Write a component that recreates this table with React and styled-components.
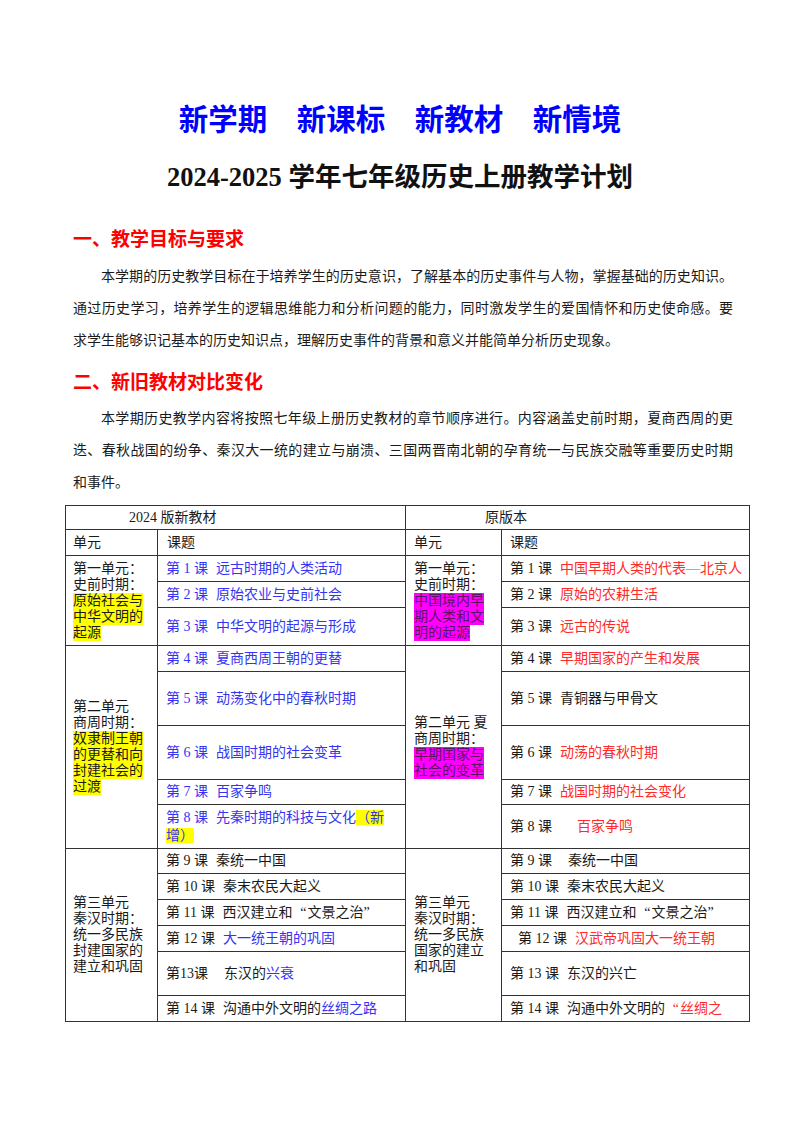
import React from 'react'
import styled, { createGlobalStyle } from 'styled-components'

const GlobalStyle = createGlobalStyle`
  html, body {
    margin: 0;
    padding: 0;
    background: #fff;
  }
  body {
    font-family: "Liberation Serif", "Noto Sans CJK SC", serif;
    color: #1a1a1a;
  }
`

const BLUE = '#3434f2'
const RED = '#ff2a2a'

const Page = styled.div`
  width: 800px;
  min-height: 1132px;
  box-sizing: border-box;
  padding-top: 99px;
`

const Slogan = styled.h1`
  margin: 0;
  text-align: center;
  font: 700 29.5px/36px "Noto Sans CJK SC", sans-serif;
  color: #0000ff;
  white-space: pre;
`

const PlanTitle = styled.h2`
  margin: 25px 0 0;
  text-align: center;
  font: 700 26.5px/34px "Liberation Serif", "Noto Sans CJK SC", serif;
  color: #111;
`

const Section = styled.section`
  padding: 0 67px 0 73px;
`

const Heading = styled.h3`
  margin: ${p => p.$top}px 0 0;
  font: 700 19px/28px "Noto Sans CJK SC", sans-serif;
  color: #ff0000;
`

const Para = styled.p`
  margin: ${p => p.$top}px 0 0;
  width: 660px;
  font: 14px/32px "Liberation Serif", "Noto Sans CJK SC", serif;
  color: #1a1a1a;
`

const Line = styled.span`
  display: block;
  text-indent: ${p => (p.$indent ? '2em' : '0')};
  text-align: ${p => (p.$justify ? 'justify' : 'left')};
  text-align-last: ${p => (p.$justify ? 'justify' : 'auto')};
`

const Sheet = styled.table`
  width: 684px;
  margin: 6px 0 0 65px;
  border-collapse: collapse;
  table-layout: fixed;
  font: 14px/18px "Liberation Serif", "Noto Sans CJK SC", serif;
  color: #1a1a1a;
`

const Col = styled.col`
  width: ${p => p.$w}px;
`

const Row = styled.tr`
  height: ${p => p.$h}px;
`

const Cell = styled.td`
  border: 1px solid #333;
  padding: 0 4px 0 ${p => p.$pad ?? 8}px;
  vertical-align: middle;
  text-align: left;
  line-height: ${p => p.$lh ?? 18}px;
  color: ${p => p.$tone ?? '#1a1a1a'};
  white-space: nowrap;
`

const UnitLine = styled.span`
  display: block;
`

const Mark = styled.span`
  display: inline-block;
  background: ${p => p.$bg};
  color: ${p => p.$ink ?? '#1a1a1a'};
  line-height: ${p => p.$lh ?? 16}px;
`

const Tag = styled.span`
  margin-left: ${p => p.$lead ?? 0}px;
  margin-right: ${p => p.$gap ?? 8}px;
`

const Hue = styled.span`
  color: ${p => p.$c};
`

// full-width book quotes, as the original word processor lays them out
const Quote = styled.span`
  display: inline-block;
  width: 1em;
  text-align: ${p => (p.$open ? 'right' : 'left')};
  padding-right: ${p => (p.$open ? 1 : 0)}px;
`

const YELLOW = '#ffff00'
const MAGENTA = '#ff00ff'

function Unit({ plain, marked, bg }) {
  return (
    <>
      {plain.map(t => (
        <UnitLine key={t}>{t}</UnitLine>
      ))}
      {marked.map(t => (
        <UnitLine key={t}>
          <Mark $bg={bg} $ink={bg === MAGENTA ? '#5e1266' : '#1a1a1a'}>{t}</Mark>
        </UnitLine>
      ))}
    </>
  )
}

export default function App() {
  return (
    <Page>
      <GlobalStyle />
      <Slogan>新学期　新课标　新教材　新情境</Slogan>
      <PlanTitle>2024-2025 学年七年级历史上册教学计划</PlanTitle>

      <Section>
        <Heading $top={30}>一、教学目标与要求</Heading>
        <Para $top={9}>
          <Line $indent $justify>本学期的历史教学目标在于培养学生的历史意识，了解基本的历史事件与人物，掌握基础的历史知识。</Line>
          <Line $justify>通过历史学习，培养学生的逻辑思维能力和分析问题的能力，同时激发学生的爱国情怀和历史使命感。要</Line>
          <Line>求学生能够识记基本的历史知识点，理解历史事件的背景和意义并能简单分析历史现象。</Line>
        </Para>

        <Heading $top={10}>二、新旧教材对比变化</Heading>
        <Para $top={8}>
          <Line $indent $justify>本学期历史教学内容将按照七年级上册历史教材的章节顺序进行。内容涵盖史前时期，夏商西周的更</Line>
          <Line $justify>迭、春秋战国的纷争、秦汉大一统的建立与崩溃、三国两晋南北朝的孕育统一与民族交融等重要历史时期</Line>
          <Line>和事件。</Line>
        </Para>
      </Section>

      <Sheet>
        <colgroup>
          <Col $w={92} />
          <Col $w={248} />
          <Col $w={96} />
          <Col $w={248} />
        </colgroup>
        <tbody>
          <Row $h={24}>
            <Cell colSpan={2} $pad={63}>2024 版新教材</Cell>
            <Cell colSpan={2} $pad={79}>原版本</Cell>
          </Row>
          <Row $h={26}>
            <Cell $pad={7}>单元</Cell>
            <Cell $pad={9}>课题</Cell>
            <Cell>单元</Cell>
            <Cell>课题</Cell>
          </Row>

          <Row $h={26}>
            <Cell rowSpan={3} $pad={7} $lh={16}>
              <Unit plain={['第一单元：', '史前时期：']} marked={['原始社会与', '中华文明的', '起源']} bg={YELLOW} />
            </Cell>
            <Cell $tone={BLUE}><Tag>第 1 课</Tag>远古时期的人类活动</Cell>
            <Cell rowSpan={3} $lh={16}>
              <Unit plain={['第一单元：', '史前时期：']} marked={['中国境内早', '期人类和文', '明的起源']} bg={MAGENTA} />
            </Cell>
            <Cell><Tag>第 1 课</Tag><Hue $c={RED}>中国早期人类的代表—北京人</Hue></Cell>
          </Row>
          <Row $h={26}>
            <Cell $tone={BLUE}><Tag>第 2 课</Tag>原始农业与史前社会</Cell>
            <Cell><Tag>第 2 课</Tag><Hue $c={RED}>原始的农耕生活</Hue></Cell>
          </Row>
          <Row $h={38}>
            <Cell $tone={BLUE}><Tag>第 3 课</Tag>中华文明的起源与形成</Cell>
            <Cell><Tag>第 3 课</Tag><Hue $c={RED}>远古的传说</Hue></Cell>
          </Row>

          <Row $h={26}>
            <Cell rowSpan={5} $pad={7} $lh={16}>
              <Unit plain={['第二单元', '商周时期：']} marked={['奴隶制王朝', '的更替和向', '封建社会的', '过渡']} bg={YELLOW} />
            </Cell>
            <Cell $tone={BLUE}><Tag>第 4 课</Tag>夏商西周王朝的更替</Cell>
            <Cell rowSpan={5} $lh={16}>
              <Unit plain={['第二单元 夏', '商周时期：']} marked={['早期国家与', '社会的变革']} bg={MAGENTA} />
            </Cell>
            <Cell><Tag>第 4 课</Tag><Hue $c={RED}>早期国家的产生和发展</Hue></Cell>
          </Row>
          <Row $h={54}>
            <Cell $tone={BLUE}><Tag>第 5 课</Tag>动荡变化中的春秋时期</Cell>
            <Cell><Tag>第 5 课</Tag>青铜器与甲骨文</Cell>
          </Row>
          <Row $h={54}>
            <Cell $tone={BLUE}><Tag>第 6 课</Tag>战国时期的社会变革</Cell>
            <Cell><Tag>第 6 课</Tag><Hue $c={RED}>动荡的春秋时期</Hue></Cell>
          </Row>
          <Row $h={25}>
            <Cell $tone={BLUE}><Tag>第 7 课</Tag>百家争鸣</Cell>
            <Cell><Tag>第 7 课</Tag><Hue $c={RED}>战国时期的社会变化</Hue></Cell>
          </Row>
          <Row $h={44}>
            <Cell $tone={BLUE}>
              <Tag>第 8 课</Tag>先秦时期的科技与文化<Mark $bg={YELLOW} $ink={BLUE} $lh={15}>（新</Mark>
              <br />
              <Mark $bg={YELLOW} $ink={BLUE} $lh={15}>增）</Mark>
            </Cell>
            <Cell><Tag $gap={25}>第 8 课</Tag><Hue $c={RED}>百家争鸣</Hue></Cell>
          </Row>

          <Row $h={25}>
            <Cell rowSpan={6} $pad={7} $lh={16}>
              <Unit plain={['第三单元', '秦汉时期：', '统一多民族', '封建国家的', '建立和巩固']} marked={[]} bg={YELLOW} />
            </Cell>
            <Cell><Tag>第 9 课</Tag>秦统一中国</Cell>
            <Cell rowSpan={6} $lh={16}>
              <Unit plain={['第三单元', '秦汉时期：', '统一多民族', '国家的建立', '和巩固']} marked={[]} bg={YELLOW} />
            </Cell>
            <Cell><Tag $gap={16}>第 9 课</Tag>秦统一中国</Cell>
          </Row>
          <Row $h={26}>
            <Cell><Tag>第 10 课</Tag>秦末农民大起义</Cell>
            <Cell><Tag>第 10 课</Tag>秦末农民大起义</Cell>
          </Row>
          <Row $h={26}>
            <Cell><Tag>第 11 课</Tag>西汉建立和<Quote $open>“</Quote>文景之治<Quote>”</Quote></Cell>
            <Cell><Tag>第 11 课</Tag>西汉建立和<Quote $open>“</Quote>文景之治<Quote>”</Quote></Cell>
          </Row>
          <Row $h={26}>
            <Cell><Tag>第 12 课</Tag><Hue $c={BLUE}>大一统王朝的巩固</Hue></Cell>
            <Cell><Tag $lead={8}>第 12 课</Tag><Hue $c={RED}>汉武帝巩固大一统王朝</Hue></Cell>
          </Row>
          <Row $h={44}>
            <Cell><Tag $gap={16}>第13课</Tag>东汉的<Hue $c={BLUE}>兴衰</Hue></Cell>
            <Cell><Tag>第 13 课</Tag>东汉的兴亡</Cell>
          </Row>
          <Row $h={26}>
            <Cell><Tag>第 14 课</Tag>沟通中外文明的<Hue $c={BLUE}>丝绸之路</Hue></Cell>
            <Cell><Tag>第 14 课</Tag>沟通中外文明的<Hue $c={RED}><Quote $open>“</Quote>丝绸之</Hue></Cell>
          </Row>
        </tbody>
      </Sheet>
    </Page>
  )
}
